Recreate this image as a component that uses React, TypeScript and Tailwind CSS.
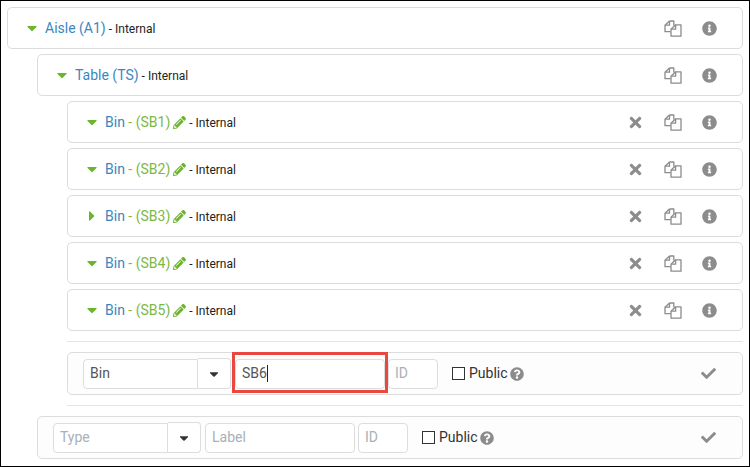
import React from "react";
import { FaCaretDown, FaCaretRight, FaPencilAlt, FaTimes, FaInfoCircle, FaCheck, FaQuestionCircle } from "react-icons/fa";

function FilesIcon() {
  return (
    <svg width="18" height="17" viewBox="0 0 18 17" fill="none" stroke="#8c8c8c" strokeWidth="1.3" strokeLinejoin="round" className="shrink-0">
      <path d="M5.5 1h4.3v4.4M5.5 1L1 5.2v6.5h5.6" />
      <path d="M5.5 1v4.2H1" />
      <path d="M11.6 4.8h5.4v11.4H7V9.2z" fill="#fff" />
      <path d="M11.6 4.8v4.4H7" />
    </svg>
  );
}

function Row({ name, code, expanded = true, removable = false }: { name: string; code?: string; expanded?: boolean; removable?: boolean }) {
  return (
    <div className="h-[42px] flex items-center pl-[19px] pr-[25px] border border-[#dcdcdc] rounded-[5px] bg-white">
      <span className="w-[10px] flex justify-center text-[#6cb52d] text-[16px]">
        {expanded ? <FaCaretDown /> : <FaCaretRight />}
      </span>
      {code ? (
        <span className="ml-[8px] pt-px text-[14px] text-[#3a87c0]">
          {name} <span className="text-[#7cb844]">- ({code})</span>
        </span>
      ) : (
        <span className="ml-[8px] pt-px text-[14px] text-[#3a87c0]">{name}</span>
      )}
      {code && <FaPencilAlt className="ml-[3px] text-[#6cb52d] text-[13px]" />}
      <span className="ml-[3px] pt-px text-[12px] text-[#222]">- Internal</span>
      <span className="ml-auto flex items-center">
        {removable && <FaTimes className="mr-[20px] text-[#8c8c8c] text-[17px]" />}
        <FilesIcon />
        <FaInfoCircle className="ml-[20px] text-[#8c8c8c] text-[15px]" />
      </span>
    </div>
  );
}

function Field({ value, placeholder, width, text = false }: { value?: string; placeholder?: string; width: string; text?: boolean }) {
  return (
    <div className={`${width} h-[30px] flex items-center px-[6px] border border-[#ddd] rounded-[4px] bg-white text-[14px]`}>
      {value ? <span className="text-[#555]">{value}</span> : <span className="text-[#a9b0b8]">{placeholder}</span>}
      {text && <span className="w-px h-[17px] bg-[#222]" />}
    </div>
  );
}

function AddForm({ type, typePlaceholder, label, labelPlaceholder, highlight = false }: { type?: string; typePlaceholder?: string; label?: string; labelPlaceholder?: string; highlight?: boolean }) {
  return (
    <div className="h-[43px] flex items-center pl-[15px] pr-[26px] border border-[#dcdcdc] rounded-[5px] bg-[#fdfdfd]">
      <div className="flex items-center">
        <div className="w-[115px] h-[30px] flex items-center px-[6px] border border-[#ddd] rounded-l-[4px] bg-white text-[14px]">
          {type ? <span className="text-[#555]">{type}</span> : <span className="text-[#a9b0b8]">{typePlaceholder}</span>}
        </div>
        <div className="w-[33px] h-[31px] flex items-center justify-center border border-l-0 border-[#ddd] rounded-r-[4px] bg-white text-[#333] text-[14px]">
          <FaCaretDown />
        </div>
      </div>
      <div className="relative ml-[4px]">
        <Field value={label} placeholder={labelPlaceholder} width="w-[150px]" text={highlight} />
        {highlight && <div className="absolute -left-[3px] -right-[3px] -top-[7px] -bottom-[4px] border-[3px] border-[#e8483f]" />}
      </div>
      <div className="ml-[3px]">
        <Field placeholder="ID" width="w-[50px]" />
      </div>
      <span className="ml-[14px] w-[13px] h-[13px] border border-[#333] bg-white" />
      <span className="ml-[4px] text-[14px] text-[#333]">Public</span>
      <FaQuestionCircle className="ml-[2px] text-[#8c8c8c] text-[14px]" />
      <FaCheck className="ml-auto text-[#8c8c8c] text-[15px]" />
    </div>
  );
}

export default function App() {
  return (
    <div className="w-[750px] h-[467px] overflow-hidden border border-black bg-white pl-[6px] pr-[6px] pt-[6px] font-['Roboto',sans-serif]">
      <div className="flex flex-col gap-[5px]">
        <Row name="Aisle (A1)" />
        <div className="pl-[30px] flex flex-col gap-[5px]">
          <Row name="Table (TS)" />
          <div className="pl-[30px] flex flex-col">
            <div className="flex flex-col gap-[5px]">
              <Row name="Bin" code="SB1" removable />
              <Row name="Bin" code="SB2" removable />
              <Row name="Bin" code="SB3" expanded={false} removable />
              <Row name="Bin" code="SB4" removable />
              <Row name="Bin" code="SB5" removable />
            </div>
            <div className="mt-[10px] mb-[10px] h-px bg-[#e4e4e4]" />
            <AddForm type="Bin" label="SB6" highlight />
            <div className="mt-[10px] mb-[5px] h-px bg-[#e4e4e4]" />
          </div>
          <AddForm typePlaceholder="Type" labelPlaceholder="Label" />
        </div>
      </div>
    </div>
  );
}
